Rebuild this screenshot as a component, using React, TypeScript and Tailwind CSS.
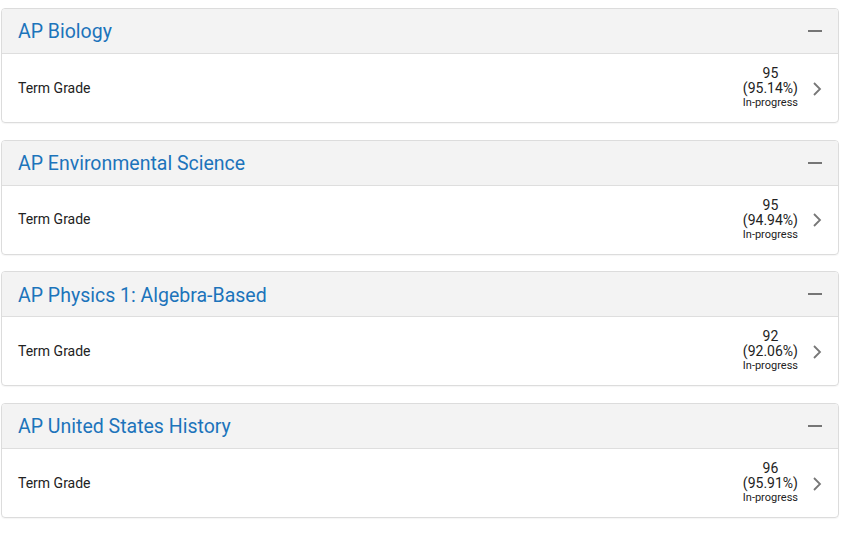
import React from "react";

const courses = [
  { name: "AP Biology", grade: "95", pct: "(95.14%)" },
  { name: "AP Environmental Science", grade: "95", pct: "(94.94%)" },
  { name: "AP Physics 1: Algebra-Based", grade: "92", pct: "(92.06%)" },
  { name: "AP United States History", grade: "96", pct: "(95.91%)" },
];

export default function App() {
  return (
    <div className="w-[849px] h-[533px] bg-white pt-[8px] pl-[1px] pr-[10px]" style={{ fontFamily: "Roboto, 'Liberation Sans', sans-serif" }}>
      <div className="flex flex-col gap-[16.7px]">
        {courses.map((c) => (
          <div key={c.name} className="h-[115px] border border-[#dcdcdc] rounded-[4px] overflow-hidden flex flex-col shadow-[0_1px_1px_rgba(0,0,0,0.04)]">
            <div className="h-[45px] bg-[#f3f3f3] border-b border-[#dedede] flex items-center justify-between pl-[16px] pr-[16px]">
              <span className="text-[19.5px] text-[#1c74bb] leading-none pt-[2px]">{c.name}</span>
              <span className="w-[14px] h-[2px] bg-[#757575]" />
            </div>
            <div className="flex-1 flex items-center justify-between pl-[16px] pr-[16px]">
              <span className="text-[14px] text-[#222]">Term Grade</span>
              <div className="flex items-center gap-[14px]">
                <div className="flex flex-col items-center text-[#222]">
                  <span className="text-[14px] leading-[15px]">{c.grade}</span>
                  <span className="text-[14px] leading-[15px]">{c.pct}</span>
                  <span className="text-[11px] leading-[14px]">In-progress</span>
                </div>
                <svg width="10" height="16" viewBox="0 0 10 16" className="mt-[1px]">
                  <path d="M2 2 L8 8 L2 14" fill="none" stroke="#777" strokeWidth="1.8" />
                </svg>
              </div>
            </div>
          </div>
        ))}
      </div>
    </div>
  );
}
